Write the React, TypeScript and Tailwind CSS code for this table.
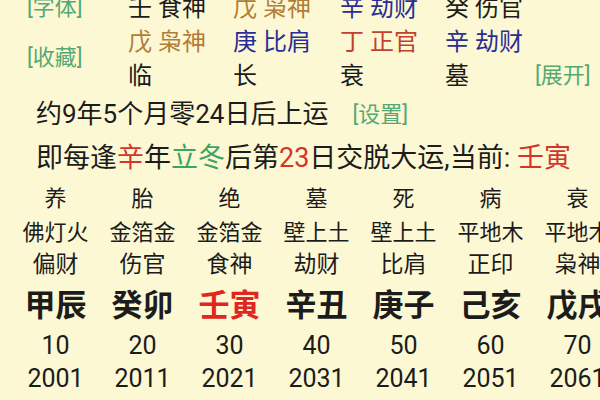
const FONT = { fontFamily: 'Roboto, "Noto Sans CJK SC", sans-serif' };

type Cell = { gan: string; shen: string; color: string };

const topRows: Cell[][] = [
  [
    { gan: '壬', shen: '食神', color: 'text-[#1c1c1c]' },
    { gan: '戊', shen: '枭神', color: 'text-[#b27c34]' },
    { gan: '辛', shen: '劫财', color: 'text-[#2b2d94]' },
    { gan: '癸', shen: '伤官', color: 'text-[#1c1c1c]' },
  ],
  [
    { gan: '戊', shen: '枭神', color: 'text-[#b27c34]' },
    { gan: '庚', shen: '比肩', color: 'text-[#2b2d94]' },
    { gan: '丁', shen: '正官', color: 'text-[#c2412c]' },
    { gan: '辛', shen: '劫财', color: 'text-[#2b2d94]' },
  ],
];

const stages = ['临', '长', '衰', '墓'];
const colW = ['w-[105px]', 'w-[107px]', 'w-[105px]', 'w-[90px]'];

const dayun = [
  { state: '养', nayin: '佛灯火', shen: '偏财', gz: '甲辰', age: 10, year: 2001 },
  { state: '胎', nayin: '金箔金', shen: '伤官', gz: '癸卯', age: 20, year: 2011 },
  { state: '绝', nayin: '金箔金', shen: '食神', gz: '壬寅', age: 30, year: 2021, current: true },
  { state: '墓', nayin: '壁上土', shen: '劫财', gz: '辛丑', age: 40, year: 2031 },
  { state: '死', nayin: '壁上土', shen: '比肩', gz: '庚子', age: 50, year: 2041 },
  { state: '病', nayin: '平地木', shen: '正印', gz: '己亥', age: 60, year: 2051 },
  { state: '衰', nayin: '平地木', shen: '枭神', gz: '戊戌', age: 70, year: 2061 },
];

function Link({ label, className = '' }: { label: string; className?: string }) {
  return <span className={`text-[#56a873] ${className}`}>[{label}]</span>;
}

export default function App() {
  return (
    <div className="w-[600px] h-[400px] overflow-hidden bg-[#fcf8d4] text-[#1c1c1c]" style={FONT}>
      {/* 四柱 */}
      <div className="flex mt-[-9px] h-[110px]">
        <div className="w-[128px] pl-[27px] flex flex-col text-[22px] leading-[34px]">
          <Link label="字体" />
          <Link label="收藏" className="mt-[16px]" />
        </div>
        <div className="flex flex-col text-[24px] leading-[34px]">
          {topRows.map((row, r) => (
            <div key={r} className="flex">
              {row.map((c, i) => (
                <div key={i} className={`${colW[i]} ${c.color} whitespace-nowrap`}>
                  {c.gan} {c.shen}
                </div>
              ))}
            </div>
          ))}
          <div className="flex">
            {stages.map((s, i) => (
              <div key={i} className={colW[i]}>{s}</div>
            ))}
            <Link label="展开" className="text-[22px]" />
          </div>
        </div>
      </div>

      {/* 起运 */}
      <div className="pl-[36px] flex items-center h-[30px] mt-[-2px]">
        <span className="text-[26px]">约9年5个月零24日后上运</span>
        <Link label="设置" className="text-[22px] ml-[24px]" />
      </div>
      <div className="pl-[36px] mt-[12px] h-[34px] flex items-center text-[27px] whitespace-nowrap">
        即每逢<span className="text-[#d3352b]">辛</span>年
        <span className="text-[#3ba565]">立冬</span>后第
        <span className="text-[#d3352b]">23</span>日交脱大运,当前:&nbsp;
        <span className="text-[#d3352b]">壬寅</span>
      </div>

      {/* 大运 */}
      <div className="ml-[12px] mt-[7px] grid grid-cols-[repeat(7,87px)] text-center">
        {dayun.map((d) => (
          <div key={d.year} className="flex flex-col items-center whitespace-nowrap">
            <div className="h-[34px] leading-[34px] text-[22px]">{d.state}</div>
            <div className="h-[33px] leading-[33px] text-[22px]">{d.nayin}</div>
            <div className="h-[32px] leading-[32px] text-[23px]">{d.shen}</div>
            <div className={`h-[49px] leading-[49px] text-[31px] font-bold ${d.current ? 'text-[#e0261e]' : ''}`}>
              {d.gz}
            </div>
            <div className="h-[31px] leading-[31px] text-[25px]">{d.age}</div>
            <div className="h-[36px] leading-[36px] text-[25px]">{d.year}</div>
          </div>
        ))}
      </div>
    </div>
  );
}
